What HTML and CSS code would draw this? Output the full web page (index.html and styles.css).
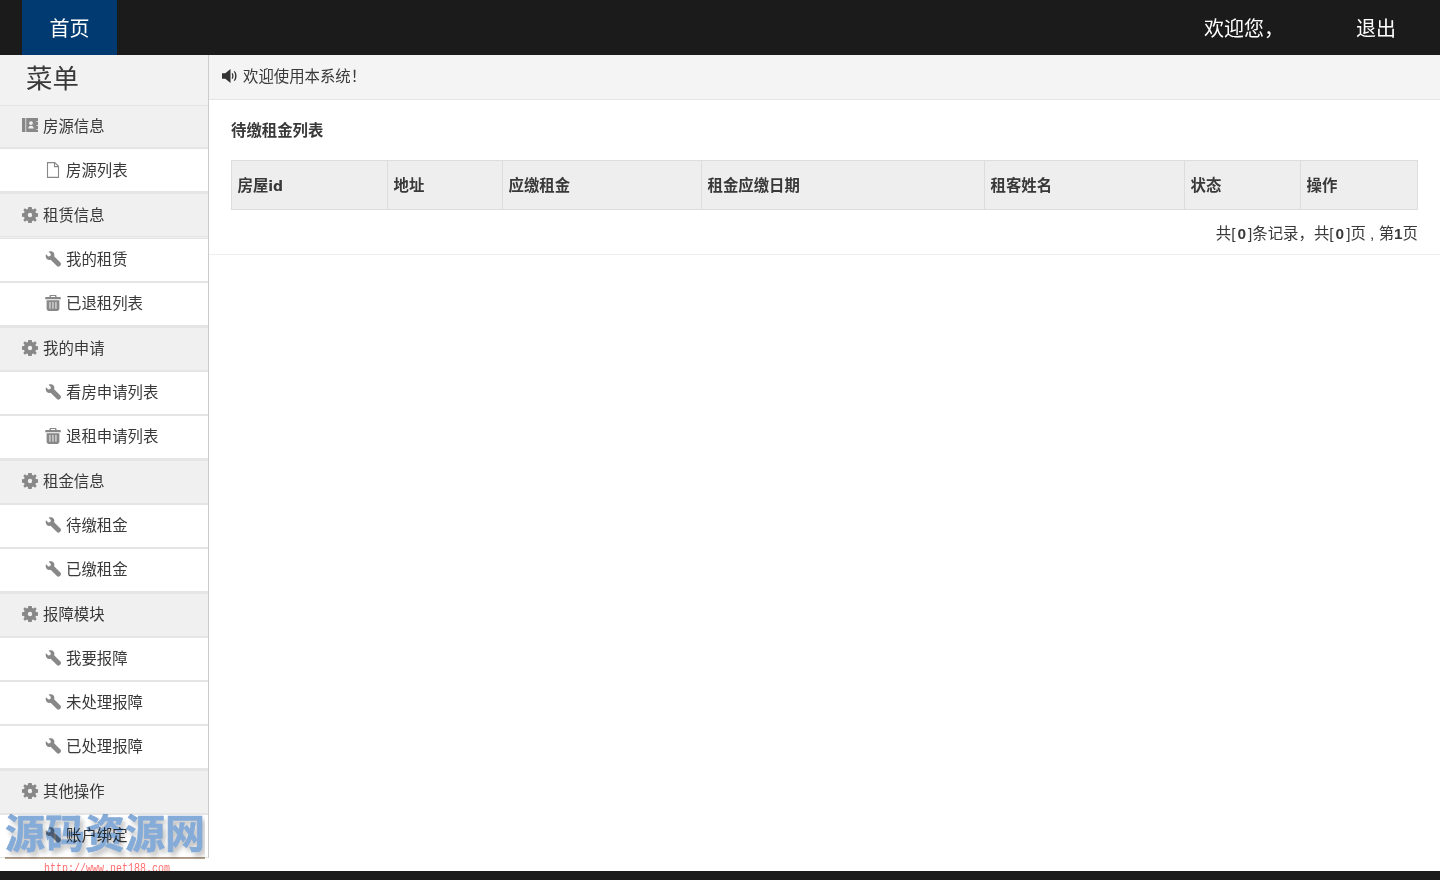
FILE: index.html
```html
<!DOCTYPE html>
<html lang="zh-CN">
<head>
<meta charset="utf-8">
<title>首页</title>
<link rel="stylesheet" href="styles.css">
</head>
<body>
<svg class="defs" width="0" height="0" aria-hidden="true">
  <defs>
    <symbol id="i-cog" viewBox="0 0 16 16"><path fill-rule="evenodd" d="M6.300 0h3.400l.4 2.100 1.200.5L13.100 1.300l1.600 1.600-1.300 1.800.5 1.200 2.100.4v3.400l-2.100.4-.5 1.200 1.300 1.800-1.600 1.600-1.800-1.300-1.200.5-.4 2.100H6.300l-.4-2.100-1.200-.5-1.800 1.300-1.600-1.600 1.300-1.800-.5-1.200-2.100-.4V6.300l2.100-.4.5-1.200-1.300-1.800 1.600-1.600 1.800 1.300 1.200-.5zM8 5.800a2.200 2.200 0 1 0 0 4.400 2.200 2.200 0 0 0 0-4.400z"/></symbol>
    <symbol id="i-wrench" viewBox="0 0 16 16"><path d="M1 3.200 3.400 5.400 5.400 4.900 5.900 3 3.600.7C5.600-.2 8 .3 8.900 2c.6 1.100.6 2.300.2 3.300l6.300 6.300c.8.8.8 2 0 2.800l-.7.700c-.8.8-2 .8-2.800 0L5.600 8.800c-1.400.4-2.800.1-3.800-.9C.7 6.700.4 4.800 1 3.200z"/></symbol>
    <symbol id="i-trash" viewBox="0 0 16 16"><path fill-rule="evenodd" d="M5.500 0h5c.6 0 1 .4 1 1v1H15c.5 0 .8.300.8.800V4.300H.2V2.800c0-.5.300-.8.800-.8h3.500V1c0-.6.400-1 1-1zm.4 1v1h4.200V1zM1.600 5.200h12.800v8.300c0 1.400-1 2.500-2.300 2.500H3.900c-1.300 0-2.300-1.100-2.300-2.500zm2.900 1.800v6.800h.9V7zm3 0v6.800h.9V7zm3 0v6.800h.9V7z"/></symbol>
    <symbol id="i-file" viewBox="0 0 16 16"><path fill="none" stroke="currentColor" stroke-width="1.100" d="M2.500.6h7.300l3.700 3.700v11.100h-11zM9.500.8v3.800h3.800"/></symbol>
    <symbol id="i-book" viewBox="0 0 16 16"><path fill-rule="evenodd" d="M0 1h3.400v14H0zM4.200 1H16v3.200h-1.600v.8H16v3.200h-1.600V9H16v3h-1.600v.8H16V15H4.200zM9 4.200a1.900 1.900 0 1 0 0 3.800 1.900 1.900 0 0 0 0-3.800zM6.300 11.600h5.400c0-1.900-1-2.900-2.700-2.900s-2.700 1-2.700 2.900z"/></symbol>
    <symbol id="i-vol" viewBox="0 0 18 16"><path d="M0 5h3.500L9 .5v15L3.500 11H0zM11 4.800c1.600 1 1.600 5.400 0 6.400l-.8-.9c.8-.9.800-3.700 0-4.600zM13.200 2.600c2.900 2 2.900 8.800 0 10.800l-.8-.9c2-1.800 2-7.200 0-9z"/></symbol>
  </defs>
</svg>

<header class="topbar">
  <a class="nav-home">首页</a>
  <div class="nav-right">
    <span class="nav-welcome">欢迎您，</span>
    <a class="nav-exit">退出</a>
  </div>
</header>

<div class="shell">
  <aside class="sidebar">
    <h2 class="menu-title">菜单</h2>
    <ul class="menu">
      <li class="group group-first"><svg class="ic"><use href="#i-book"/></svg>房源信息</li>
      <li class="item item-flush"><svg class="ic"><use href="#i-file"/></svg>房源列表</li>
    </ul>
    <ul class="menu">
      <li class="group group-double"><svg class="ic"><use href="#i-cog"/></svg>租赁信息</li>
      <li class="item"><svg class="ic"><use href="#i-wrench"/></svg>我的租赁</li>
      <li class="item"><svg class="ic"><use href="#i-trash"/></svg>已退租列表</li>
    </ul>
    <ul class="menu">
      <li class="group"><svg class="ic"><use href="#i-cog"/></svg>我的申请</li>
      <li class="item"><svg class="ic"><use href="#i-wrench"/></svg>看房申请列表</li>
      <li class="item"><svg class="ic"><use href="#i-trash"/></svg>退租申请列表</li>
    </ul>
    <ul class="menu">
      <li class="group"><svg class="ic"><use href="#i-cog"/></svg>租金信息</li>
      <li class="item"><svg class="ic"><use href="#i-wrench"/></svg>待缴租金</li>
      <li class="item"><svg class="ic"><use href="#i-wrench"/></svg>已缴租金</li>
    </ul>
    <ul class="menu">
      <li class="group"><svg class="ic"><use href="#i-cog"/></svg>报障模块</li>
      <li class="item"><svg class="ic"><use href="#i-wrench"/></svg>我要报障</li>
      <li class="item"><svg class="ic"><use href="#i-wrench"/></svg>未处理报障</li>
      <li class="item"><svg class="ic"><use href="#i-wrench"/></svg>已处理报障</li>
    </ul>
    <ul class="menu">
      <li class="group"><svg class="ic"><use href="#i-cog"/></svg>其他操作</li>
      <li class="item"><svg class="ic"><use href="#i-wrench"/></svg>账户绑定</li>
    </ul>
  </aside>

  <main class="content">
    <div class="crumb"><svg class="ic-vol"><use href="#i-vol"/></svg>欢迎使用本系统！</div>
    <section class="panel">
      <h3 class="panel-title">待缴租金列表</h3>
      <table class="grid">
        <thead>
          <tr>
            <th class="c1">房屋<span class="th-latin">id</span></th>
            <th class="c2">地址</th>
            <th class="c3">应缴租金</th>
            <th class="c4">租金应缴日期</th>
            <th class="c5">租客姓名</th>
            <th class="c6">状态</th>
            <th class="c7">操作</th>
          </tr>
        </thead>
      </table>
      <p class="pager">共[<b class="count">0</b>]条记录，共[<b class="count">0</b>]页 , 第<b>1</b>页</p>
    </section>
  </main>
</div>

<footer class="footbar"></footer>

<div class="mark">
  <div class="mark-name">源码资源网</div>
  <div class="mark-url">http://www.net188.com</div>
</div>
</body>
</html>
```

FILE: styles.css
```css
* { box-sizing: border-box; }
html, body { margin: 0; height: 100%; }
body {
  height: 880px;
  overflow: hidden;
  display: flex;
  flex-direction: column;
  background: #fff;
  color: #393939;
  font: 15.4px/20px "Liberation Sans", "Noto Sans CJK SC", sans-serif;
}
.defs { position: absolute; }

.topbar {
  flex: none;
  height: 55px;
  padding-left: 22px;
  display: flex;
  justify-content: space-between;
  background: #1b1b1b;
  color: #fff;
  font-size: 20px;
  line-height: 58px;
}
.nav-home { width: 95px; text-align: center; background: #003a70; }
.nav-right { display: flex; padding-right: 44px; }
.nav-welcome { width: 152px; }

.shell { flex: none; height: 816px; display: flex; }

.sidebar {
  flex: none;
  width: 209px;
  height: 803px;
  overflow: hidden;
  background: #f2f2f2;
  border-right: 1px solid #ccc;
}
.menu-title {
  margin: 0;
  height: 51px;
  padding-left: 26px;
  font-size: 26.400px;
  font-weight: 400;
  line-height: 49px;
  border-bottom: 1px solid #e5e5e5;
}
.menu { list-style: none; margin: 0; padding: 0; border-bottom: 1px solid #e5e5e5; }
.menu li {
  height: 44px;
  display: flex;
  align-items: center;
  border-bottom: 2px solid #e5e5e5;
}
.group { padding-left: 22px; background: #f0f0f0; }
.item { padding-left: 45px; background: #fff; }
.menu .group-first { height: 43px; }
.menu .item-flush { padding-top: 2px; }
.menu .group-double { height: 45px; padding-top: 2px; border-bottom: 3px double #e5e5e5; }
.menu .ic { width: 16px; height: 16px; margin-right: 5px; margin-top: -3px; fill: #888; color: #888; }

.content { flex: 1; min-width: 0; }
.crumb {
  height: 45px;
  padding-left: 13px;
  display: flex;
  align-items: center;
  background: #f4f4f4;
  border-bottom: 1px solid #e5e5e5;
}
.ic-vol { width: 17px; height: 16px; margin-right: 4px; margin-top: -3px; fill: #333; }
.panel { height: 155px; padding: 0 22px; border-bottom: 1px solid #eee; }
.panel-title { margin: 0; padding-top: 21px; height: 60px; font-size: 15.4px; line-height: 20px; font-weight: 700; }
.grid { width: 1186px; table-layout: fixed; border-collapse: collapse; }
.grid th {
  height: 49px;
  padding: 2px 5px 0 5.5px;
  text-align: left;
  font-weight: 700;
  background: #eee;
  border: 1px solid #ddd;
}
.th-latin { font: 700 14px "DejaVu Sans", sans-serif; }
.c1 { width: 156px; }
.c2 { width: 115px; }
.c3 { width: 199px; }
.c4 { width: 283px; }
.c5 { width: 200px; }
.c6 { width: 116px; }
.c7 { width: 117px; }
.pager { margin: 14px 0 0; width: 1187px; text-align: right; }
.count { padding: 0 2px; }

.footbar { flex: none; height: 9px; background: #1b1b1b; }

.mark {
  position: absolute;
  left: 5px;
  top: 813px;
  width: 200px;
  height: 58px;
  overflow: hidden;
  mix-blend-mode: multiply;
  pointer-events: none;
}
.mark-name {
  height: 46px;
  border-bottom: 2px solid #b8a48f;
  font-size: 40px;
  font-weight: 700;
  line-height: 42px;
  color: #85abd8;
  -webkit-text-stroke: .6px #85abd8;
  text-shadow: 3px 4px 5px rgba(0, 0, 0, .28);
}
.mark-url {
  padding: 2px 0 0 39px;
  font: 10px/12px "Liberation Mono", monospace;
  color: #ff6f6f;
  white-space: nowrap;
  transform: scaleY(1.25);
  transform-origin: top;
}
```
